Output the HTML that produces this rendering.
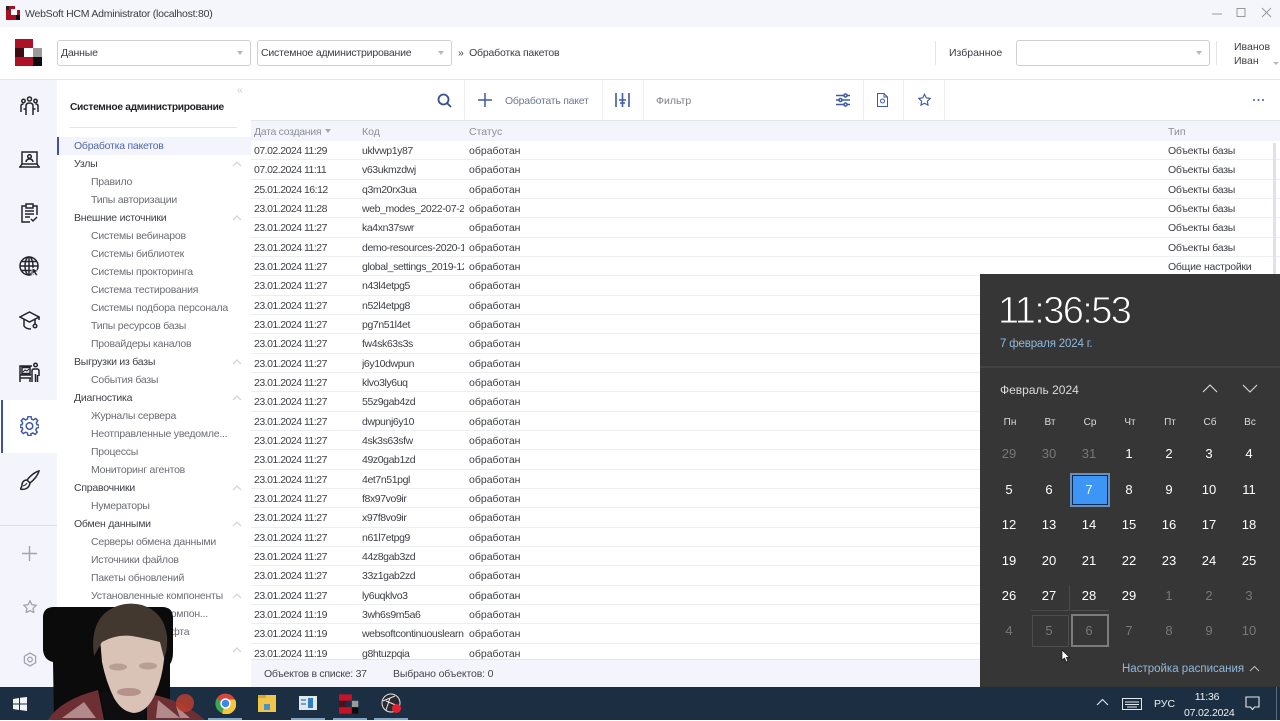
<!DOCTYPE html>
<html lang="ru"><head><meta charset="utf-8"><title>WebSoft HCM Administrator</title>
<style>
*{box-sizing:border-box;margin:0;padding:0}
html,body{width:1280px;height:720px;overflow:hidden;background:#fff;font-family:"Liberation Sans",sans-serif;font-size:10.5px;color:#33363c}
.a{position:absolute;white-space:nowrap}
.sel{position:absolute;top:40px;height:26px;background:#fff;border:1px solid #cfd0d4;border-radius:3px;padding:6px 3px;font-size:10.5px;letter-spacing:-.2px;line-height:13px;color:#3a3d44}
.sel:after{content:"";position:absolute;right:7px;top:10px;border:3.5px solid transparent;border-top:4px solid #b8b9bd}
.m{position:absolute;left:74px;white-space:nowrap;font-size:10.5px;letter-spacing:-.24px;color:#3f4248;line-height:20px;height:18px}
.s{position:absolute;left:91px;white-space:nowrap;font-size:10.5px;letter-spacing:-.24px;color:#6a6d74;line-height:20px;height:18px}
.c{position:absolute;left:232px;width:10px;height:6px}
#rows{position:absolute;left:251px;top:141px;width:1029px}
.r{position:relative;height:19.33px;border-bottom:1px solid #eceef3;line-height:21px;font-size:10.5px;color:#3d4046;white-space:nowrap}
.r span{position:absolute;top:0}
.r span:nth-child(1){left:3px;letter-spacing:-.5px}
.r span:nth-child(2){left:111px;width:102px;overflow:hidden;letter-spacing:-.4px}
.r span:nth-child(3){left:218px}
.r span:nth-child(4){left:917px;letter-spacing:-.25px}
.d{position:absolute;width:40px;text-align:center;font-size:13px;line-height:18px;color:#fff}
.o{color:#77787a}
.w{position:absolute;width:40px;text-align:center;font-size:10px;line-height:12px;top:417px;color:#dcdcdc}
.ic{position:absolute;fill:none;stroke:#23252b;stroke-width:1.5}
.gi{stroke:#a0a3ad;stroke-width:1.3}
.bi{stroke:#3f5aa6;stroke-width:1.6}
.v{position:absolute;width:1px;background:#eceef2}
</style></head><body>

<!-- title bar -->
<div class="a" style="left:0;top:0;width:1280px;height:27px;background:#f4f6fc"></div>
<svg class="a" style="left:6px;top:6px" width="14" height="14" viewBox="0 0 14 14"><rect width="14" height="14" fill="#a80f22"/><rect x="0" y="0" width="3" height="4" fill="#222"/><rect x="5" y="3" width="6" height="6" fill="#fff"/><rect x="9" y="0" width="5" height="4" fill="#f4f6fc"/><rect x="10" y="9" width="4" height="5" fill="#111"/></svg>
<div class="a" style="left:25px;top:7px;font-size:10.5px;letter-spacing:-.24px;color:#3a3c42;line-height:14px">WebSoft HCM Administrator (localhost:80)</div>
<svg class="a" style="left:1208px;top:6px" width="70" height="14" fill="none" stroke="#999" stroke-width="1"><path d="M4 8h10"/><rect x="29" y="2.500" width="8" height="8"/><path d="M54 2l9 9M63 2l-9 9"/></svg>

<!-- header -->
<svg class="a" style="left:15px;top:39px" width="28" height="27" viewBox="0 0 28 27"><rect x="0" y="0" width="18" height="9" fill="#ad1126"/><rect x="0" y="9" width="9" height="9" fill="#3c0b14"/><rect x="9" y="9" width="9" height="9" fill="#fff"/><rect x="18" y="9" width="9" height="9" fill="#9a9a9a"/><rect x="0" y="18" width="18" height="9" fill="#ad1126"/><rect x="18" y="18" width="9" height="9" fill="#0d0d0d"/></svg>
<div class="sel" style="left:57px;width:194px">Данные</div>
<div class="sel" style="left:257px;width:195px">Системное администрирование</div>
<div class="a" style="left:458px;top:47px;font-size:10.5px;letter-spacing:-.2px;color:#3a3d44;line-height:13px">» &nbsp;Обработка пакетов</div>
<div class="v" style="left:935px;top:41px;height:24px;background:#e3e4e8"></div>
<div class="a" style="left:949px;top:47px;font-size:10.5px;color:#3a3d44;line-height:13px">Избранное</div>
<div class="sel" style="left:1016px;width:194px"></div>
<div class="v" style="left:1216px;top:41px;height:24px;background:#e3e4e8"></div>
<div class="a" style="left:1234px;top:40px;font-size:10.5px;color:#3a3d44;line-height:14px">Иванов<br>Иван</div>
<div class="a" style="left:1273px;top:62px;border:3px solid transparent;border-top:3px solid #b8b9bd"></div>
<div class="a" style="left:0;top:79px;width:1280px;height:1px;background:#e4e5ea"></div>

<!-- left rail -->
<div class="a" style="left:0;top:80px;width:57px;height:607px;background:#f4f5fc"></div>
<div class="a" style="left:0;top:400px;width:57px;height:53px;background:#fff"></div>
<div class="a" style="left:1px;top:400px;width:2px;height:53px;background:#3f51a3"></div>
<div class="a" style="left:0;top:525px;width:57px;height:1px;background:#dfe1e8"></div>

<svg class="ic" style="left:20px;top:96px" width="19" height="20" viewBox="0 0 19 20"><circle cx="9.500" cy="3" r="2"/><circle cx="3.500" cy="5" r="1.700"/><circle cx="15.500" cy="5" r="1.700"/><path d="M6 19V10q0-3 3.500-3T13 10v9M1 16V10q0-2 2.500-2M18 16V10q0-2-2.500-2M6 13H3.500M13 13h2.500"/></svg>
<svg class="ic" style="left:19px;top:151px" width="21" height="18" viewBox="0 0 21 18"><rect x="3" y="1" width="15" height="12"/><circle cx="10.500" cy="5.500" r="1.800"/><path d="M7 11q.5-3 3.500-3t3.500 3M0 16h21M3 13l-2 3M18 13l2 3"/></svg>
<svg class="ic" style="left:21px;top:203px" width="17" height="20" viewBox="0 0 17 20"><path d="M5 3H1v16h8M12 3h4v9"/><rect x="5" y="1" width="7" height="4"/><path d="M4 8h9M4 11h9M4 14h5M10 16l2 2 4-4"/></svg>
<svg class="ic" style="left:19px;top:256px" width="21" height="20" viewBox="0 0 21 20"><circle cx="10" cy="10" r="9"/><ellipse cx="10" cy="10" rx="4" ry="9"/><path d="M1 10h18M2.500 5.500h15M2.500 14.500h15M10 1v18"/><path d="M13 12l7 3-3 1 2 3-2 1-2-3-2 2z" fill="#23252b" stroke="#f4f5fc" stroke-width=".8"/></svg>
<svg class="ic" style="left:19px;top:311px" width="21" height="19" viewBox="0 0 21 19"><path d="M10.500 1L20 6l-9.500 5L1 6zM5 8.500V15q2 3 7 3M16 8.500V13M20 6v3"/><circle cx="16" cy="15" r="1.800"/></svg>
<svg class="ic" style="left:19px;top:362px" width="21" height="21" viewBox="0 0 21 21"><path d="M1 20V4h12M1 13h11M1 16h11M11 16v4M3 5.500v6h8v-6z"/><path d="M4 10l2-2 2 1 2-2" stroke-width="1"/><circle cx="16.500" cy="3" r="1.800"/><path d="M13 20V9q0-2 2-2h3q2 0 2 2v5M16.500 12v8M18.500 13v7"/></svg>
<svg class="ic" style="left:20px;top:416px;stroke:#3f5aa6" width="19" height="20" viewBox="0 0 19 20"><path d="M8 1h3l.6 2.600 1.800.8 2.300-1.400 2 2.200-1.400 2.200.7 1.800L19 9.500v2.500l-2.500.7-.7 1.800 1.400 2.200-2 2.200-2.300-1.400-1.800.8L11 20H8l-.6-2.500-1.800-.8-2.300 1.400-2-2.200 1.400-2.200-.7-1.800L0 12V9.500l2-.3.700-1.800-1.400-2.200 2-2.200 2.300 1.400 1.800-.8z" transform="translate(0 -.5)"/><circle cx="9.500" cy="10" r="3.300"/></svg>
<svg class="ic" style="left:20px;top:470px" width="20" height="21" viewBox="0 0 20 21"><path d="M7 10C10 6 15 2 19 1c-1 4-5 9-9 12zM7 10c-3 0-5 2-5 5 0 2-1 3-2 4 4 1 9 0 10-6z"/><path d="M3 16q3-1 4-3" stroke-width="1"/></svg>
<svg class="ic gi" style="left:22px;top:546px;stroke-width:1.400" width="15" height="15"><path d="M7.500 0v15M0 7.500h15"/></svg>
<svg class="ic gi" style="left:23px;top:600px" width="14" height="13" viewBox="0 0 14 13"><path d="M7 .8l1.900 3.900 4.300.6-3.100 3 .7 4.300L7 10.600l-3.800 2 .7-4.300-3.100-3 4.300-.6z"/></svg>
<svg class="ic gi" style="left:23px;top:652px" width="14" height="15" viewBox="0 0 14 15"><path d="M7 1l5.600 3.200v6.600L7 14l-5.600-3.200V4.200z"/><circle cx="7" cy="7.500" r="2.300"/></svg>

<!-- sidebar -->
<div class="a" style="left:57px;top:80px;width:194px;height:607px;background:#fff"></div>
<div class="a" style="left:237px;top:86px;font-size:10px;color:#c9cbd2;line-height:10px;letter-spacing:-1px">‹‹</div>
<div class="a" style="left:70px;top:101px;font-size:10.200px;letter-spacing:-.3px;font-weight:bold;color:#1f2126;line-height:14px">Системное администрирование</div>
<div class="a" style="left:70px;top:127px;width:167px;height:1px;background:#e4e5ea"></div>
<div class="a" style="left:57px;top:137px;width:194px;height:18px;background:#f4f5fc"></div>
<div class="a" style="left:57px;top:137px;width:2px;height:18px;background:#3f51a3"></div>

<div class="m" style="top:136px;color:#4f66a8">Обработка пакетов</div>
<div class="m" style="top:154px">Узлы</div>
<div class="s" style="top:172px">Правило</div>
<div class="s" style="top:190px">Типы авторизации</div>
<div class="m" style="top:208px">Внешние источники</div>
<div class="s" style="top:226px">Системы вебинаров</div>
<div class="s" style="top:244px">Системы библиотек</div>
<div class="s" style="top:262px">Системы прокторинга</div>
<div class="s" style="top:280px">Система тестирования</div>
<div class="s" style="top:298px">Системы подбора персонала</div>
<div class="s" style="top:316px">Типы ресурсов базы</div>
<div class="s" style="top:334px">Провайдеры каналов</div>
<div class="m" style="top:352px">Выгрузки из базы</div>
<div class="s" style="top:370px">События базы</div>
<div class="m" style="top:388px">Диагностика</div>
<div class="s" style="top:406px">Журналы сервера</div>
<div class="s" style="top:424px">Неотправленные уведомле...</div>
<div class="s" style="top:442px">Процессы</div>
<div class="s" style="top:460px">Мониторинг агентов</div>
<div class="m" style="top:478px">Справочники</div>
<div class="s" style="top:496px">Нумераторы</div>
<div class="m" style="top:514px">Обмен данными</div>
<div class="s" style="top:532px">Серверы обмена данными</div>
<div class="s" style="top:550px">Источники файлов</div>
<div class="s" style="top:568px">Пакеты обновлений</div>
<div class="s" style="top:586px">Установленные компоненты</div>
<div class="s" style="top:604px">Установленные компон...</div>
<div class="s" style="top:622px">Дистрибутивы софта</div>

<svg class="c" style="top:161px" viewBox="0 0 10 6" fill="none" stroke="#d4d5da" stroke-width="1.300"><path d="M1 5l4-4 4 4"/></svg>
<svg class="c" style="top:215px" viewBox="0 0 10 6" fill="none" stroke="#d4d5da" stroke-width="1.300"><path d="M1 5l4-4 4 4"/></svg>
<svg class="c" style="top:359px" viewBox="0 0 10 6" fill="none" stroke="#d4d5da" stroke-width="1.300"><path d="M1 5l4-4 4 4"/></svg>
<svg class="c" style="top:395px" viewBox="0 0 10 6" fill="none" stroke="#d4d5da" stroke-width="1.300"><path d="M1 5l4-4 4 4"/></svg>
<svg class="c" style="top:485px" viewBox="0 0 10 6" fill="none" stroke="#d4d5da" stroke-width="1.300"><path d="M1 5l4-4 4 4"/></svg>
<svg class="c" style="top:521px" viewBox="0 0 10 6" fill="none" stroke="#d4d5da" stroke-width="1.300"><path d="M1 5l4-4 4 4"/></svg>
<svg class="c" style="top:593px" viewBox="0 0 10 6" fill="none" stroke="#d4d5da" stroke-width="1.300"><path d="M1 5l4-4 4 4"/></svg>
<svg class="c" style="top:647px" viewBox="0 0 10 6" fill="none" stroke="#d4d5da" stroke-width="1.300"><path d="M1 5l4-4 4 4"/></svg>

<!-- toolbar -->
<div class="a" style="left:251px;top:80px;width:1029px;height:41px;background:#fff;border-bottom:1px solid #e4e5ea"></div>
<div class="v" style="left:464px;top:80px;height:40px"></div>
<div class="v" style="left:602px;top:80px;height:40px"></div>
<div class="v" style="left:643px;top:80px;height:40px"></div>
<div class="v" style="left:863px;top:80px;height:40px"></div>
<div class="v" style="left:903px;top:80px;height:40px"></div>
<div class="v" style="left:944px;top:80px;height:40px"></div>
<svg class="ic bi" style="left:437px;top:93px;stroke:#34518f;stroke-width:1.800" width="15" height="15"><circle cx="6.500" cy="6.500" r="5"/><path d="M10 10l4 4"/></svg>
<svg class="ic bi" style="left:478px;top:93px;stroke-width:1.500" width="14" height="14"><path d="M7 0v14M0 7h14"/></svg>
<div class="a" style="left:505px;top:94px;font-size:10.5px;letter-spacing:-.25px;color:#6d7a90;line-height:14px">Обработать пакет</div>
<svg class="ic bi" style="left:615px;top:93px" width="15" height="14"><path d="M1 0v14M14 0v14M7.500 0v14M4 7h7M5 10h5"/></svg>
<div class="a" style="left:656px;top:94px;font-size:10.5px;color:#7b7e85;line-height:14px">Фильтр</div>
<svg class="ic bi" style="left:836px;top:93px" width="14" height="14"><path d="M0 2.500h14M0 7h14M0 11.500h14"/><circle cx="9.500" cy="2.500" r="1.500" fill="#fff"/><circle cx="4.500" cy="7" r="1.500" fill="#fff"/><circle cx="9.500" cy="11.500" r="1.500" fill="#fff"/></svg>
<svg class="ic bi" style="left:877px;top:93px;stroke-width:1" width="11" height="14"><path d="M.5.500h6.500l3.500 3.500v9.500h-10z"/><path d="M7 .5V4h3.500"/><circle cx="5.500" cy="8" r="2"/></svg>
<svg class="ic bi" style="left:918px;top:93px;stroke-width:1.200" width="13" height="13" viewBox="0 0 14 13"><path d="M7 .8l1.900 3.900 4.300.6-3.100 3 .7 4.300L7 10.600l-3.800 2 .7-4.300-3.100-3 4.300-.6z"/></svg>
<div class="a" style="left:1253px;top:99px;width:2px;height:2px;border-radius:1px;background:#3f5aa6;box-shadow:4.500px 0 #3f5aa6,9px 0 #3f5aa6"></div>

<!-- table header -->
<div class="a" style="left:251px;top:121px;width:1029px;height:20px;background:#f4f5fc"></div>
<div class="a" style="left:254px;top:125px;font-size:10.5px;letter-spacing:-.3px;color:#8c8f97;line-height:14px">Дата создания</div>
<div class="a" style="left:325px;top:129px;border:3px solid transparent;border-top:4px solid #a8aab2"></div>
<div class="a" style="left:362px;top:125px;font-size:10.5px;color:#8c8f97;line-height:14px">Код</div>
<div class="a" style="left:469px;top:125px;font-size:10.5px;color:#8c8f97;line-height:14px">Статус</div>
<div class="a" style="left:1168px;top:125px;font-size:10.5px;color:#8c8f97;line-height:14px">Тип</div>

<!-- rows -->
<div id="rows">
<div class="r"><span>07.02.2024 11:29</span><span>uklvwp1y87</span><span>обработан</span><span>Объекты базы</span></div>
<div class="r"><span>07.02.2024 11:11</span><span>v63ukmzdwj</span><span>обработан</span><span>Объекты базы</span></div>
<div class="r"><span>25.01.2024 16:12</span><span>q3m20rx3ua</span><span>обработан</span><span>Объекты базы</span></div>
<div class="r"><span>23.01.2024 11:28</span><span>web_modes_2022-07-20</span><span>обработан</span><span>Объекты базы</span></div>
<div class="r"><span>23.01.2024 11:27</span><span>ka4xn37swr</span><span>обработан</span><span>Объекты базы</span></div>
<div class="r"><span>23.01.2024 11:27</span><span>demo-resources-2020-1</span><span>обработан</span><span>Объекты базы</span></div>
<div class="r"><span>23.01.2024 11:27</span><span>global_settings_2019-12</span><span>обработан</span><span>Общие настройки</span></div>
<div class="r"><span>23.01.2024 11:27</span><span>n43l4etpg5</span><span>обработан</span><span></span></div>
<div class="r"><span>23.01.2024 11:27</span><span>n52l4etpg8</span><span>обработан</span><span></span></div>
<div class="r"><span>23.01.2024 11:27</span><span>pg7n51l4et</span><span>обработан</span><span></span></div>
<div class="r"><span>23.01.2024 11:27</span><span>fw4sk63s3s</span><span>обработан</span><span></span></div>
<div class="r"><span>23.01.2024 11:27</span><span>j6y10dwpun</span><span>обработан</span><span></span></div>
<div class="r"><span>23.01.2024 11:27</span><span>klvo3ly6uq</span><span>обработан</span><span></span></div>
<div class="r"><span>23.01.2024 11:27</span><span>55z9gab4zd</span><span>обработан</span><span></span></div>
<div class="r"><span>23.01.2024 11:27</span><span>dwpunj6y10</span><span>обработан</span><span></span></div>
<div class="r"><span>23.01.2024 11:27</span><span>4sk3s63sfw</span><span>обработан</span><span></span></div>
<div class="r"><span>23.01.2024 11:27</span><span>49z0gab1zd</span><span>обработан</span><span></span></div>
<div class="r"><span>23.01.2024 11:27</span><span>4et7n51pgl</span><span>обработан</span><span></span></div>
<div class="r"><span>23.01.2024 11:27</span><span>f8x97vo9ir</span><span>обработан</span><span></span></div>
<div class="r"><span>23.01.2024 11:27</span><span>x97f8vo9ir</span><span>обработан</span><span></span></div>
<div class="r"><span>23.01.2024 11:27</span><span>n61l7etpg9</span><span>обработан</span><span></span></div>
<div class="r"><span>23.01.2024 11:27</span><span>44z8gab3zd</span><span>обработан</span><span></span></div>
<div class="r"><span>23.01.2024 11:27</span><span>33z1gab2zd</span><span>обработан</span><span></span></div>
<div class="r"><span>23.01.2024 11:27</span><span>ly6uqklvo3</span><span>обработан</span><span></span></div>
<div class="r"><span>23.01.2024 11:19</span><span>3wh6s9m5a6</span><span>обработан</span><span></span></div>
<div class="r"><span>23.01.2024 11:19</span><span>websoftcontinuouslearning</span><span>обработан</span><span></span></div>
<div class="r" style="height:18px;border:0"><span>23.01.2024 11:19</span><span>g8htuzpqia</span><span>обработан</span><span></span></div>
</div>
<div class="a" style="left:1273px;top:143px;width:3px;height:131px;background:#dfe2ee"></div>

<!-- status bar -->
<div class="a" style="left:251px;top:659px;width:729px;height:28px;background:#f4f5fc;border-top:1px solid #e4e5ea"></div>
<div class="a" style="left:264px;top:667px;font-size:10.5px;letter-spacing:-.28px;color:#44474d;line-height:14px">Объектов в списке: 37</div>
<div class="a" style="left:393px;top:667px;font-size:10.5px;letter-spacing:-.15px;color:#44474d;line-height:14px">Выбрано объектов: 0</div>

<!-- taskbar -->
<div class="a" style="left:0;top:687px;width:1280px;height:33px;background:#1c2e42"></div>
<svg class="a" style="left:13px;top:697px" width="14" height="14" fill="#f2f5f8"><path d="M0 2l6-1v5.500H0zM7 .8L14 0v6.500H7zM0 7.500h6V13l-6-1zM7 7.500h7V14l-7-1z"/></svg>
<svg class="a" style="left:215px;top:693px" width="21" height="21" viewBox="0 0 21 21"><circle cx="10.500" cy="10.500" r="10" fill="#d8453a"/><path d="M10.500 10.500L1.800 5.500A10 10 0 0 0 7 20z" fill="#3aa655"/><path d="M10.500 10.500L7 20.400A10 10 0 0 0 20 6.500h-9.500z" fill="#f5c63c"/><circle cx="10.500" cy="10.500" r="4.500" fill="#3f86e8" stroke="#fff" stroke-width="1.500"/></svg>
<svg class="a" style="left:258px;top:695px" width="18" height="17"><rect width="18" height="17" fill="#f0c64a"/><rect y="0" width="8" height="3" fill="#d9a62e"/><rect x="6" y="9" width="6" height="6" fill="#4c93c7"/></svg>
<svg class="a" style="left:299px;top:696px" width="18" height="14"><rect width="18" height="14" fill="#dfe7ef"/><rect x="9" y="2" width="5" height="10" fill="#2e7fc4"/><rect x="2" y="3" width="5" height="2" fill="#7f9bb6"/><rect x="2" y="7" width="5" height="2" fill="#7f9bb6"/></svg>
<svg class="a" style="left:339px;top:694px" width="20" height="20" viewBox="0 0 28 27"><rect x="0" y="0" width="18" height="9" fill="#c5142a"/><rect x="0" y="9" width="9" height="9" fill="#50101a"/><rect x="9" y="9" width="9" height="9" fill="#1c2e42"/><rect x="18" y="9" width="9" height="9" fill="#9a9a9a"/><rect x="0" y="18" width="18" height="9" fill="#c5142a"/><rect x="18" y="18" width="9" height="9" fill="#0d0d0d"/></svg>
<svg class="a" style="left:381px;top:693px" width="21" height="21" viewBox="0 0 21 21"><circle cx="10" cy="10" r="9" fill="#2a2a30" stroke="#e8e8ea" stroke-width="1"/><path d="M2 8l12-5M5 17L9 5M17 13L5 8" stroke="#e8e8ea" fill="none"/><circle cx="15.500" cy="15.500" r="4.500" fill="#e5202e"/></svg>
<div class="a" style="left:208px;top:718px;width:34px;height:2px;background:#7fa6c9"></div>
<div class="a" style="left:291px;top:718px;width:34px;height:2px;background:#7fa6c9"></div>
<div class="a" style="left:333px;top:718px;width:34px;height:2px;background:#7fa6c9"></div>
<div class="a" style="left:374px;top:718px;width:34px;height:2px;background:#7fa6c9"></div>

<svg class="a" style="left:1096px;top:698px" width="13" height="8" fill="none" stroke="#e6e9ee" stroke-width="1.100"><path d="M1 7l5.500-5.500L12 7"/></svg>
<svg class="a" style="left:1122px;top:698px" width="20" height="12" fill="none" stroke="#e6e9ee"><rect x=".5" y=".5" width="19" height="11"/><path d="M3 4h14M3 6.500h14M5 9h10"/></svg>
<div class="a" style="left:1154px;top:697px;font-size:10.5px;color:#eef1f4;line-height:14px">РУС</div>
<div class="a" style="left:1184px;top:689px;width:46px;text-align:center;font-size:10.5px;letter-spacing:-.2px;line-height:16px;color:#eef1f4">11:36<br>07.02.2024</div>
<svg class="a" style="left:1245px;top:696px" width="15" height="15" fill="none" stroke="#e6e9ee" stroke-width="1.100"><path d="M1 1h13v10H9.500L7.500 13.500 5.500 11H1z"/></svg>
<div class="a" style="left:1276px;top:687px;width:1px;height:33px;background:#5a6b7c"></div>

<!-- clock flyout -->
<div class="a" style="left:980px;top:274px;width:300px;height:413px;background:#363636"></div>
<div class="a" style="left:980px;top:366px;width:300px;height:2px;background:#434343"></div>
<div class="a" style="left:998px;top:289px;font-size:38px;line-height:44px;color:#fff;letter-spacing:-1.600px;-webkit-text-stroke:.9px #363636">11:36:53</div>
<div class="a" style="left:1000px;top:337px;font-size:11.500px;letter-spacing:-.17px;line-height:14px;color:#8fb9dc">7 февраля 2024 г.</div>
<div class="a" style="left:1000px;top:383px;font-size:12px;line-height:15px;color:#dcdcdc">Февраль 2024</div>
<svg class="a" style="left:1202px;top:383px" width="56" height="10" fill="none" stroke="#dcdcdc" stroke-width="1.100"><path d="M1 9l7-7 7 7M41 2l7 7 7-7"/></svg>

<div class="w" style="left:990px">Пн</div><div class="w" style="left:1030px">Вт</div><div class="w" style="left:1070px">Ср</div><div class="w" style="left:1110px">Чт</div><div class="w" style="left:1150px">Пт</div><div class="w" style="left:1190px">Сб</div><div class="w" style="left:1230px">Вс</div>

<div class="d o" style="left:989px;top:445px">29</div><div class="d o" style="left:1029px;top:445px">30</div><div class="d o" style="left:1069px;top:445px">31</div><div class="d" style="left:1109px;top:445px">1</div><div class="d" style="left:1149px;top:445px">2</div><div class="d" style="left:1189px;top:445px">3</div><div class="d" style="left:1229px;top:445px">4</div>

<div class="a" style="left:1070px;top:473px;width:40px;height:34px;background:#3d96f5;border:2px solid #6c8fb8;box-shadow:inset 0 0 0 1px #0a2a5a"></div>
<div class="d" style="left:989px;top:481px">5</div><div class="d" style="left:1029px;top:481px">6</div><div class="d" style="left:1069px;top:481px">7</div><div class="d" style="left:1109px;top:481px">8</div><div class="d" style="left:1149px;top:481px">9</div><div class="d" style="left:1189px;top:481px">10</div><div class="d" style="left:1229px;top:481px">11</div>

<div class="d" style="left:989px;top:516px">12</div><div class="d" style="left:1029px;top:516px">13</div><div class="d" style="left:1069px;top:516px">14</div><div class="d" style="left:1109px;top:516px">15</div><div class="d" style="left:1149px;top:516px">16</div><div class="d" style="left:1189px;top:516px">17</div><div class="d" style="left:1229px;top:516px">18</div>

<div class="d" style="left:989px;top:552px">19</div><div class="d" style="left:1029px;top:552px">20</div><div class="d" style="left:1069px;top:552px">21</div><div class="d" style="left:1109px;top:552px">22</div><div class="d" style="left:1149px;top:552px">23</div><div class="d" style="left:1189px;top:552px">24</div><div class="d" style="left:1229px;top:552px">25</div>

<div class="a" style="left:1031px;top:610px;width:38px;height:1px;background:#4a4a4a"></div>
<div class="a" style="left:1071px;top:610px;width:38px;height:1px;background:#4f4f4f"></div>
<div class="a" style="left:1069px;top:585px;width:1px;height:26px;background:#4a4a4a"></div>
<div class="d" style="left:989px;top:587px">26</div><div class="d" style="left:1029px;top:587px">27</div><div class="d" style="left:1069px;top:587px">28</div><div class="d" style="left:1109px;top:587px">29</div><div class="d o" style="left:1149px;top:587px">1</div><div class="d o" style="left:1189px;top:587px">2</div><div class="d o" style="left:1229px;top:587px">3</div>

<div class="a" style="left:1032px;top:615px;width:37px;height:32px;border:1px solid #4d4d4d"></div>
<div class="a" style="left:1071px;top:614px;width:38px;height:33px;border:2px solid #7c7c7c"></div>
<div class="d o" style="left:989px;top:622px">4</div><div class="d o" style="left:1029px;top:622px">5</div><div class="d o" style="left:1069px;top:622px">6</div><div class="d o" style="left:1109px;top:622px">7</div><div class="d o" style="left:1149px;top:622px">8</div><div class="d o" style="left:1189px;top:622px">9</div><div class="d o" style="left:1229px;top:622px">10</div>

<div class="a" style="left:1122px;top:662px;font-size:11.500px;line-height:14px;color:#8fb9dc">Настройка расписания</div>
<svg class="a" style="left:1249px;top:665px" width="11" height="7" fill="none" stroke="#bbb" stroke-width="1"><path d="M1 6l4.500-4.500L10 6"/></svg>
<svg class="a" style="left:1061px;top:649px" width="9" height="14" viewBox="0 0 9 14"><path d="M1 1v10l2.500-2 1.800 4 1.700-.8L5.300 8.500H8.500z" fill="#fff" stroke="#111" stroke-width=".7"/></svg>

<!-- webcam: svg origin at (40,600) -->
<svg class="a" style="left:40px;top:600px" width="175" height="120" viewBox="0 0 175 120">
<path d="M3 16Q4 7 14 7H122Q133 7 133 18V52Q133 60 130 64V120H14L13 62Q4 60 3 50z" fill="#0b0b0c"/>
<path d="M8 120Q20 100 58 90L64 120zM107 94Q140 98 165 120H107z" fill="#6d2e34"/>
<path d="M22 118L44 102 56 118zM30 112l10-6 4 8zM118 100l22 18h-24zM136 106l14 12h-10z" fill="#b18a8c"/>
<path d="M60 92h50l-6 28H66z" fill="#0e0e10"/>
<path d="M60 38Q62 24 92 24Q122 24 125 42L124 60Q122 78 116 92Q108 112 94 113Q82 112 74 98Q66 82 62 62z" fill="#d9c2b6"/>
<ellipse cx="78" cy="67" rx="9" ry="3.500" fill="#a99086" opacity=".7"/>
<ellipse cx="108" cy="66" rx="9" ry="3.500" fill="#a99086" opacity=".7"/>
<ellipse cx="89" cy="92" rx="12" ry="4" fill="#b5928c"/>
<path d="M54 56Q50 28 64 14Q80 0 102 5Q124 12 127 36Q128 50 124 58L120 42Q104 38 92 36Q76 34 62 42z" fill="#43382f"/>
<circle cx="145" cy="103" r="9" fill="#c2402c" opacity=".8"/>
</svg>
</body></html>
